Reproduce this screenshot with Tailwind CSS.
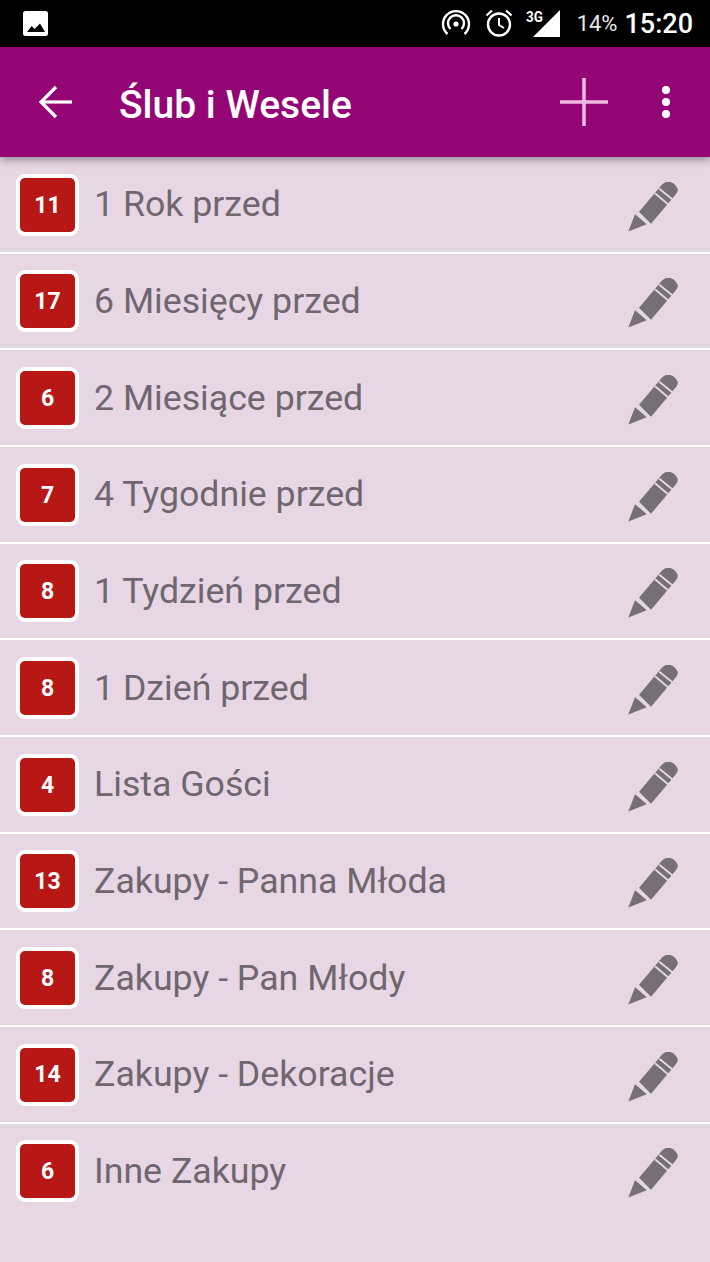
<!DOCTYPE html>
<html><head><meta charset="utf-8"><script src="https://cdn.jsdelivr.net/npm/@tailwindcss/browser@4"></script></head>
<body class="m-0">
<div class="w-[710px] h-[1262px] overflow-hidden bg-[#e7d7e5] flex flex-col font-['Roboto',sans-serif] relative">
  <div class="h-[47px] shrink-0 bg-black flex items-center text-white relative">
    <svg class="ml-[22px]" width="27" height="27" viewBox="0 0 27 27"><rect x="1" y="1" width="25" height="25" rx="2.5" fill="#fff"/><path d="M5 22 L9.700 16 L12.500 19 L18 13.500 L23 22 Z" fill="#000"/></svg>
    <div class="ml-auto flex items-center pt-[1px]">
      <svg width="30" height="30" viewBox="0 0 30 30" fill="none" stroke="#fff" stroke-width="2.4"><circle cx="15" cy="15" r="2.600" fill="#fff" stroke="none"/><path d="M9.500 20 A8 8 0 1 1 20.500 20"/><path d="M6.500 25 A13 13 0 1 1 23.500 25"/></svg>
      <svg class="ml-[13px]" width="30" height="30" viewBox="0 0 30 30" fill="none" stroke="#fff" stroke-width="2.400"><circle cx="15" cy="15.500" r="11"/><path d="M15 9 V16 L20 19" stroke-width="2"/><path d="M2.500 6.500 L8 1.500 M27.500 6.500 L22 1.500" stroke-width="2.200"/></svg>
      <div class="relative w-[37px] h-[30px] ml-[12px]">
        <span class="absolute left-0 top-[-1px] text-[15px] font-bold leading-[18px] scale-x-90 origin-left">3G</span>
        <svg class="absolute left-[7px] top-0" width="28" height="29" viewBox="0 0 28 29"><path d="M27 1 V28 H0 Z" fill="#fff"/></svg>
      </div>
      <span class="ml-[14px] text-[22px] leading-none text-[#e8e8e8]">14%</span>
      <span class="ml-[7px] mr-[17px] text-[27px] font-medium leading-none">15:20</span>
    </div>
  </div>
  <header class="h-[110px] shrink-0 bg-[#940575] flex items-center relative z-10 shadow-[0_3px_8px_rgba(0,0,0,0.35)] text-white">
    <svg class="ml-[38px]" width="36" height="34" viewBox="0 0 36 34" fill="none" stroke="#fff" stroke-width="3.200"><path d="M34 17 H3"/><path d="M18 2 L3 17 L18 32"/></svg>
    <h1 class="ml-[45px] mt-[6px] text-[39px] font-medium leading-none">Ślub i Wesele</h1>
    <svg class="ml-auto" width="48" height="48" viewBox="0 0 48 48" stroke="#eebbe4" stroke-width="3.500"><path d="M24 0 V48 M0 24 H48"/></svg>
    <svg class="ml-[53px] mr-[39px]" width="10" height="34" viewBox="0 0 10 34" fill="#fff"><circle cx="5" cy="5" r="4"/><circle cx="5" cy="17" r="4"/><circle cx="5" cy="29" r="4"/></svg>
  </header>
  <ul class="flex flex-col">
    <li class="h-[96.67px] pt-[2px] flex items-center border-b-2 border-white text-[#6f666e]"><span class="ml-[16px] mb-[1px] w-[63px] h-[62px] pt-[2px] flex items-center justify-center rounded-[9px] bg-[#b71816] border-4 border-white text-white text-[23px] font-bold">11</span><span class="ml-[15px] text-[35.700px] leading-none">1 Rok przed</span><svg class="ml-auto mr-[31px] mt-[4px]" width="51" height="51" viewBox="0 0 51 51" fill="#776f76"><path d="M0.300 49.500 L7 32.300 L11.300 35.700 L18.700 42.300 Z M11 29.700 L34.300 2.300 Q38 -1 42 -0.300 Q48 2 49.800 7.300 Q50 10 47.500 12.800 L23 41.700 Z"/><path d="M31.300 6.700 L45.800 18.500 M27 11.300 L41.800 23.800" stroke="#e7d7e5" stroke-width="1.800" fill="none"/></svg></li>
    <li class="h-[96.67px] pt-[2px] flex items-center border-b-2 border-white text-[#6f666e]"><span class="ml-[16px] mb-[1px] w-[63px] h-[62px] pt-[2px] flex items-center justify-center rounded-[9px] bg-[#b71816] border-4 border-white text-white text-[23px] font-bold">17</span><span class="ml-[15px] text-[35.700px] leading-none">6 Miesięcy przed</span><svg class="ml-auto mr-[31px] mt-[4px]" width="51" height="51" viewBox="0 0 51 51" fill="#776f76"><path d="M0.300 49.500 L7 32.300 L11.300 35.700 L18.700 42.300 Z M11 29.700 L34.300 2.300 Q38 -1 42 -0.300 Q48 2 49.800 7.300 Q50 10 47.500 12.800 L23 41.700 Z"/><path d="M31.300 6.700 L45.800 18.500 M27 11.300 L41.800 23.800" stroke="#e7d7e5" stroke-width="1.800" fill="none"/></svg></li>
    <li class="h-[96.67px] pt-[2px] flex items-center border-b-2 border-white text-[#6f666e]"><span class="ml-[16px] mb-[1px] w-[63px] h-[62px] pt-[2px] flex items-center justify-center rounded-[9px] bg-[#b71816] border-4 border-white text-white text-[23px] font-bold">6</span><span class="ml-[15px] text-[35.700px] leading-none">2 Miesiące przed</span><svg class="ml-auto mr-[31px] mt-[4px]" width="51" height="51" viewBox="0 0 51 51" fill="#776f76"><path d="M0.300 49.500 L7 32.300 L11.300 35.700 L18.700 42.300 Z M11 29.700 L34.300 2.300 Q38 -1 42 -0.300 Q48 2 49.800 7.300 Q50 10 47.500 12.800 L23 41.700 Z"/><path d="M31.300 6.700 L45.800 18.500 M27 11.300 L41.800 23.800" stroke="#e7d7e5" stroke-width="1.800" fill="none"/></svg></li>
    <li class="h-[96.67px] pt-[2px] flex items-center border-b-2 border-white text-[#6f666e]"><span class="ml-[16px] mb-[1px] w-[63px] h-[62px] pt-[2px] flex items-center justify-center rounded-[9px] bg-[#b71816] border-4 border-white text-white text-[23px] font-bold">7</span><span class="ml-[15px] text-[35.700px] leading-none">4 Tygodnie przed</span><svg class="ml-auto mr-[31px] mt-[4px]" width="51" height="51" viewBox="0 0 51 51" fill="#776f76"><path d="M0.300 49.500 L7 32.300 L11.300 35.700 L18.700 42.300 Z M11 29.700 L34.300 2.300 Q38 -1 42 -0.300 Q48 2 49.800 7.300 Q50 10 47.500 12.800 L23 41.700 Z"/><path d="M31.300 6.700 L45.800 18.500 M27 11.300 L41.800 23.800" stroke="#e7d7e5" stroke-width="1.800" fill="none"/></svg></li>
    <li class="h-[96.67px] pt-[2px] flex items-center border-b-2 border-white text-[#6f666e]"><span class="ml-[16px] mb-[1px] w-[63px] h-[62px] pt-[2px] flex items-center justify-center rounded-[9px] bg-[#b71816] border-4 border-white text-white text-[23px] font-bold">8</span><span class="ml-[15px] text-[35.700px] leading-none">1 Tydzień przed</span><svg class="ml-auto mr-[31px] mt-[4px]" width="51" height="51" viewBox="0 0 51 51" fill="#776f76"><path d="M0.300 49.500 L7 32.300 L11.300 35.700 L18.700 42.300 Z M11 29.700 L34.300 2.300 Q38 -1 42 -0.300 Q48 2 49.800 7.300 Q50 10 47.500 12.800 L23 41.700 Z"/><path d="M31.300 6.700 L45.800 18.500 M27 11.300 L41.800 23.800" stroke="#e7d7e5" stroke-width="1.800" fill="none"/></svg></li>
    <li class="h-[96.67px] pt-[2px] flex items-center border-b-2 border-white text-[#6f666e]"><span class="ml-[16px] mb-[1px] w-[63px] h-[62px] pt-[2px] flex items-center justify-center rounded-[9px] bg-[#b71816] border-4 border-white text-white text-[23px] font-bold">8</span><span class="ml-[15px] text-[35.700px] leading-none">1 Dzień przed</span><svg class="ml-auto mr-[31px] mt-[4px]" width="51" height="51" viewBox="0 0 51 51" fill="#776f76"><path d="M0.300 49.500 L7 32.300 L11.300 35.700 L18.700 42.300 Z M11 29.700 L34.300 2.300 Q38 -1 42 -0.300 Q48 2 49.800 7.300 Q50 10 47.500 12.800 L23 41.700 Z"/><path d="M31.300 6.700 L45.800 18.500 M27 11.300 L41.800 23.800" stroke="#e7d7e5" stroke-width="1.800" fill="none"/></svg></li>
    <li class="h-[96.67px] pt-[2px] flex items-center border-b-2 border-white text-[#6f666e]"><span class="ml-[16px] mb-[1px] w-[63px] h-[62px] pt-[2px] flex items-center justify-center rounded-[9px] bg-[#b71816] border-4 border-white text-white text-[23px] font-bold">4</span><span class="ml-[15px] text-[35.700px] leading-none">Lista Gości</span><svg class="ml-auto mr-[31px] mt-[4px]" width="51" height="51" viewBox="0 0 51 51" fill="#776f76"><path d="M0.300 49.500 L7 32.300 L11.300 35.700 L18.700 42.300 Z M11 29.700 L34.300 2.300 Q38 -1 42 -0.300 Q48 2 49.800 7.300 Q50 10 47.500 12.800 L23 41.700 Z"/><path d="M31.300 6.700 L45.800 18.500 M27 11.300 L41.800 23.800" stroke="#e7d7e5" stroke-width="1.800" fill="none"/></svg></li>
    <li class="h-[96.67px] pt-[2px] flex items-center border-b-2 border-white text-[#6f666e]"><span class="ml-[16px] mb-[1px] w-[63px] h-[62px] pt-[2px] flex items-center justify-center rounded-[9px] bg-[#b71816] border-4 border-white text-white text-[23px] font-bold">13</span><span class="ml-[15px] text-[35.700px] leading-none">Zakupy - Panna Młoda</span><svg class="ml-auto mr-[31px] mt-[4px]" width="51" height="51" viewBox="0 0 51 51" fill="#776f76"><path d="M0.300 49.500 L7 32.300 L11.300 35.700 L18.700 42.300 Z M11 29.700 L34.300 2.300 Q38 -1 42 -0.300 Q48 2 49.800 7.300 Q50 10 47.500 12.800 L23 41.700 Z"/><path d="M31.300 6.700 L45.800 18.500 M27 11.300 L41.800 23.800" stroke="#e7d7e5" stroke-width="1.800" fill="none"/></svg></li>
    <li class="h-[96.67px] pt-[2px] flex items-center border-b-2 border-white text-[#6f666e]"><span class="ml-[16px] mb-[1px] w-[63px] h-[62px] pt-[2px] flex items-center justify-center rounded-[9px] bg-[#b71816] border-4 border-white text-white text-[23px] font-bold">8</span><span class="ml-[15px] text-[35.700px] leading-none">Zakupy - Pan Młody</span><svg class="ml-auto mr-[31px] mt-[4px]" width="51" height="51" viewBox="0 0 51 51" fill="#776f76"><path d="M0.300 49.500 L7 32.300 L11.300 35.700 L18.700 42.300 Z M11 29.700 L34.300 2.300 Q38 -1 42 -0.300 Q48 2 49.800 7.300 Q50 10 47.500 12.800 L23 41.700 Z"/><path d="M31.300 6.700 L45.800 18.500 M27 11.300 L41.800 23.800" stroke="#e7d7e5" stroke-width="1.800" fill="none"/></svg></li>
    <li class="h-[96.67px] pt-[2px] flex items-center border-b-2 border-white text-[#6f666e]"><span class="ml-[16px] mb-[1px] w-[63px] h-[62px] pt-[2px] flex items-center justify-center rounded-[9px] bg-[#b71816] border-4 border-white text-white text-[23px] font-bold">14</span><span class="ml-[15px] text-[35.700px] leading-none">Zakupy - Dekoracje</span><svg class="ml-auto mr-[31px] mt-[4px]" width="51" height="51" viewBox="0 0 51 51" fill="#776f76"><path d="M0.300 49.500 L7 32.300 L11.300 35.700 L18.700 42.300 Z M11 29.700 L34.300 2.300 Q38 -1 42 -0.300 Q48 2 49.800 7.300 Q50 10 47.500 12.800 L23 41.700 Z"/><path d="M31.300 6.700 L45.800 18.500 M27 11.300 L41.800 23.800" stroke="#e7d7e5" stroke-width="1.800" fill="none"/></svg></li>
    <li class="h-[96.67px] pt-[2px] flex items-center border-b-2 border-transparent text-[#6f666e]"><span class="ml-[16px] mb-[1px] w-[63px] h-[62px] pt-[2px] flex items-center justify-center rounded-[9px] bg-[#b71816] border-4 border-white text-white text-[23px] font-bold">6</span><span class="ml-[15px] text-[35.700px] leading-none">Inne Zakupy</span><svg class="ml-auto mr-[31px] mt-[4px]" width="51" height="51" viewBox="0 0 51 51" fill="#776f76"><path d="M0.300 49.500 L7 32.300 L11.300 35.700 L18.700 42.300 Z M11 29.700 L34.300 2.300 Q38 -1 42 -0.300 Q48 2 49.800 7.300 Q50 10 47.500 12.800 L23 41.700 Z"/><path d="M31.300 6.700 L45.800 18.500 M27 11.300 L41.800 23.800" stroke="#e7d7e5" stroke-width="1.800" fill="none"/></svg></li>
  </ul>
</div>
</body></html>
